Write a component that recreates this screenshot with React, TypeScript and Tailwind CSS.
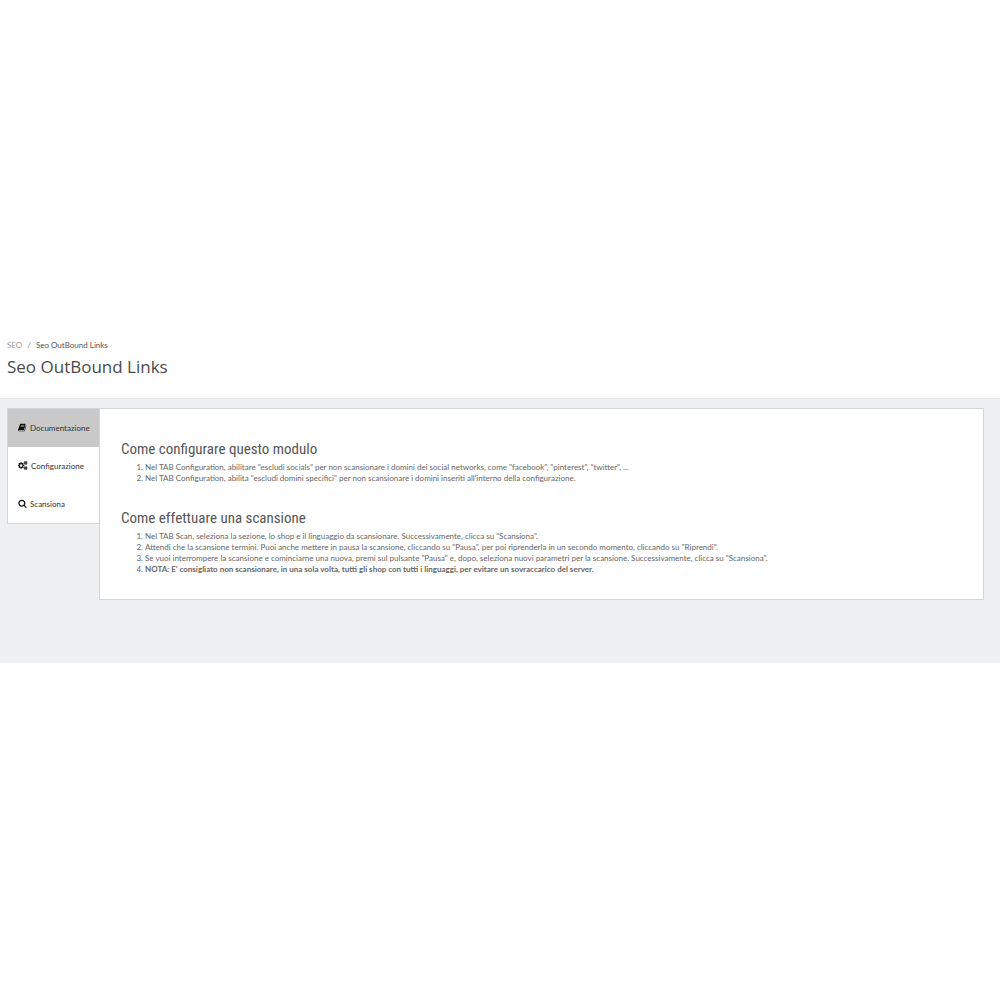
import { useState } from 'react';

function BookIcon() {
  return (
    <svg viewBox="0 0 1792 1792" className="w-[9px] h-[9px]" fill="currentColor" aria-hidden="true">
      <path d="M1639 478q40 57 18 129l-275 906q-19 64-76.500 107.500t-122.500 43.500h-923q-77 0-148.500-53.500t-99.500-131.500q-24-67-2-127 0-4 3-27t4-37q1-8-3-21.500t-3-19.500q2-11 8-21t16.500-23.500 16.500-23.500q23-38 45-91.500t30-91.500q3-10 .5-30t-.5-28q3-11 17-28t17-23q21-36 42-92t25-90q1-9-2.500-32t.5-28q4-13 22-30.500t22-22.500q19-26 42.500-84.500t27.500-96.500q1-8-3-25.500t-2-26.500q2-8 9-18t18-23 17-21q8-12 16.500-30.500t15-35 16-36 19.500-32 26.500-23.500 36-11.500 47.500 5.500l-1 3q38-9 51-9h761q74 0 114 56t18 130l-274 906q-36 119-71.500 153.500t-128.500 34.500h-869q-27 0-38 15-11 16-1 43 24 70 144 70h923q29 0 56-15.500t35-41.500l300-987q7-22 5-57 38 15 59 43zm-1064 2q-4 13 2 22.500t20 9.500h608q13 0 25.500-9.500t16.500-22.500l21-64q4-13-2-22.500t-20-9.500h-608q-13 0-25.500 9.500t-16.500 22.500zm-83 256q-4 13 2 22.500t20 9.500h608q13 0 25.500-9.500t16.500-22.500l21-64q4-13-2-22.500t-20-9.500h-608q-13 0-25.500 9.500t-16.500 22.500z" />
    </svg>
  );
}

function CogsIcon() {
  return (
    <svg viewBox="0 0 1920 1792" className="w-[10px] h-[9px]" fill="currentColor" aria-hidden="true">
      <path d="M832 896q0-106-75-181t-181-75-181 75-75 181 75 181 181 75 181-75 75-181zm768 512q0-52-38-90t-90-38-90 38-38 90q0 53 37.500 90.500t90.500 37.500 90.500-37.500 37.500-90.500zm0-1024q0-52-38-90t-90-38-90 38-38 90q0 53 37.500 90.500t90.500 37.500 90.500-37.500 37.500-90.500zm-384 421v185q0 10-7 19.500t-16 10.500l-155 24q-11 35-32 76 34 48 90 115 7 11 7 20 0 12-7 19-23 30-82.500 89.500t-78.500 59.500q-11 0-21-7l-115-90q-37 19-77 31-11 108-23 155-7 24-30 24h-186q-11 0-20-7.500t-10-17.500l-23-153q-34-10-75-31l-118 89q-7 7-20 7-11 0-21-8-144-133-144-160 0-9 7-19 10-14 41-53t47-61q-23-44-35-82l-152-24q-10-1-17-9.500t-7-19.500v-185q0-10 7-19.500t16-10.500l155-24q11-35 32-76-34-48-90-115-7-11-7-20 0-12 7-20 22-30 82-89t79-59q11 0 21 7l115 90q34-18 77-32 11-108 23-154 7-24 30-24h186q11 0 20 7.500t10 17.500l23 153q34 10 75 31l118-89q8-7 20-7 11 0 21 8 144 133 144 160 0 8-7 19-12 16-42 54t-45 60q23 48 34 82l152 23q10 2 17 10.500t7 19.500z" />
      <path id="small-cog" fillRule="evenodd" d="M1856 1338v140q0 16-149 31-12 27-30 52 51 113 51 138 0 4-4 7-122 71-124 71-8 0-46-47t-52-68q-20 2-30 2t-30-2q-14 21-52 68t-46 47q-2 0-124-71-4-3-4-7 0-25 51-138-18-25-30-52-149-15-149-31v-140q0-16 149-31 13-29 30-52-51-113-51-138 0-4 4-7 4-2 35-20t59-34 30-16q8 0 46 46.500t52 67.500q20-2 30-2t30 2q51-71 92-112l6-2q4 0 124 70 4 3 4 7 0 25-51 138 17 23 30 52 149 15 149 31zM1600 1408a128 128 0 1 0-256 0a128 128 0 1 0 256 0z" />
      <use href="#small-cog" y="-1024" />
    </svg>
  );
}

function SearchIcon() {
  return (
    <svg viewBox="0 0 1792 1792" className="w-[9px] h-[9px]" fill="currentColor" aria-hidden="true">
      <path d="M1216 832q0-185-131.500-316.500t-316.500-131.500-316.500 131.500-131.500 316.500 131.500 316.500 316.500 131.500 316.500-131.500 131.500-316.500zm512 832q0 52-38 90t-90 38q-54 0-90-38l-343-342q-179 124-399 124-143 0-273.500-55.500t-225-150-150-225-55.500-273.500 55.500-273.500 150-225 225-150 273.500-55.500 273.500 55.500 225 150 150 225 55.500 273.500q0 220-124 399l343 343q37 37 37 90z" />
    </svg>
  );
}

const tabs = [
  { id: 'docs', label: 'Documentazione', icon: <BookIcon /> },
  { id: 'config', label: 'Configurazione', icon: <CogsIcon /> },
  { id: 'scan', label: 'Scansiona', icon: <SearchIcon /> },
];

const headingClass = "font-['Ubuntu_Condensed','Roboto_Condensed',sans-serif] text-[15px] leading-[20px] text-[#555]";
const listClass = 'list-decimal pl-6 mt-[3px] text-[8px] leading-[11px] text-[#666]';

export default function App() {
  const [active, setActive] = useState('docs');

  return (
    <div className="min-h-screen bg-white flex flex-col justify-center font-['Lato',sans-serif]">
      <header className="px-[7px] pb-5">
        <nav aria-label="breadcrumb" className="flex gap-[5px] text-[8px] leading-[14px] text-[#555]">
          <a href="#seo" className="text-[#999]">SEO</a>
          <span className="text-[#777]">/</span>
          <span>Seo OutBound Links</span>
        </nav>
        <h1 className="mt-1 font-['Open_Sans',sans-serif] text-[17px] leading-[22px] text-[#4a4a4a]">Seo OutBound Links</h1>
      </header>

      <main className="bg-[#eff0f2] border-t border-[#e6e7e9] flex items-start pl-[7px] pr-4 pt-[9px] pb-[63px]">
        {/* Tabs */}
        <nav className="w-[92px] shrink-0 bg-white border border-r-0 border-[#d3d5d7]">
          {tabs.map((tab) => (
            <button
              key={tab.id}
              onClick={() => setActive(tab.id)}
              className={`w-full h-[38px] pl-[10px] flex items-center gap-[3px] text-[8px] text-[#333] whitespace-nowrap ${
                active === tab.id ? 'bg-[#c9c9c9]' : 'bg-white'
              }`}
            >
              <span className="text-[#111]">{tab.icon}</span>
              {tab.label}
            </button>
          ))}
        </nav>

        {/* Content */}
        <section className="flex-1 bg-white border border-[#d3d5d7] px-[21px] pt-[30px] pb-6">
          <h2 className={headingClass}>Come configurare questo modulo</h2>
          <ol className={listClass}>
            <li>Nel TAB Configuration, abilitare "escludi socials" per non scansionare i domini dei social networks, come "facebook", "pinterest", "twitter", ...</li>
            <li>Nel TAB Configuration, abilita "escludi domini specifici" per non scansionare i domini inseriti all'interno della configurazione.</li>
          </ol>

          <h2 className={`mt-6 ${headingClass}`}>Come effettuare una scansione</h2>
          <ol className={listClass}>
            <li>Nel TAB Scan, seleziona la sezione, lo shop e il linguaggio da scansionare. Successivamente, clicca su "Scansiona".</li>
            <li>Attendi che la scansione termini. Puoi anche mettere in pausa la scansione, cliccando su "Pausa", per poi riprenderla in un secondo momento, cliccando su "Riprendi".</li>
            <li>Se vuoi interrompere la scansione e cominciarne una nuova, premi sul pulsante "Pausa" e, dopo, seleziona nuovi parametri per la scansione. Successivamente, clicca su "Scansiona".</li>
            <li><strong>NOTA: E' consigliato non scansionare, in una sola volta, tutti gli shop con tutti i linguaggi, per evitare un sovraccarico del server.</strong></li>
          </ol>
        </section>
      </main>
    </div>
  );
}
